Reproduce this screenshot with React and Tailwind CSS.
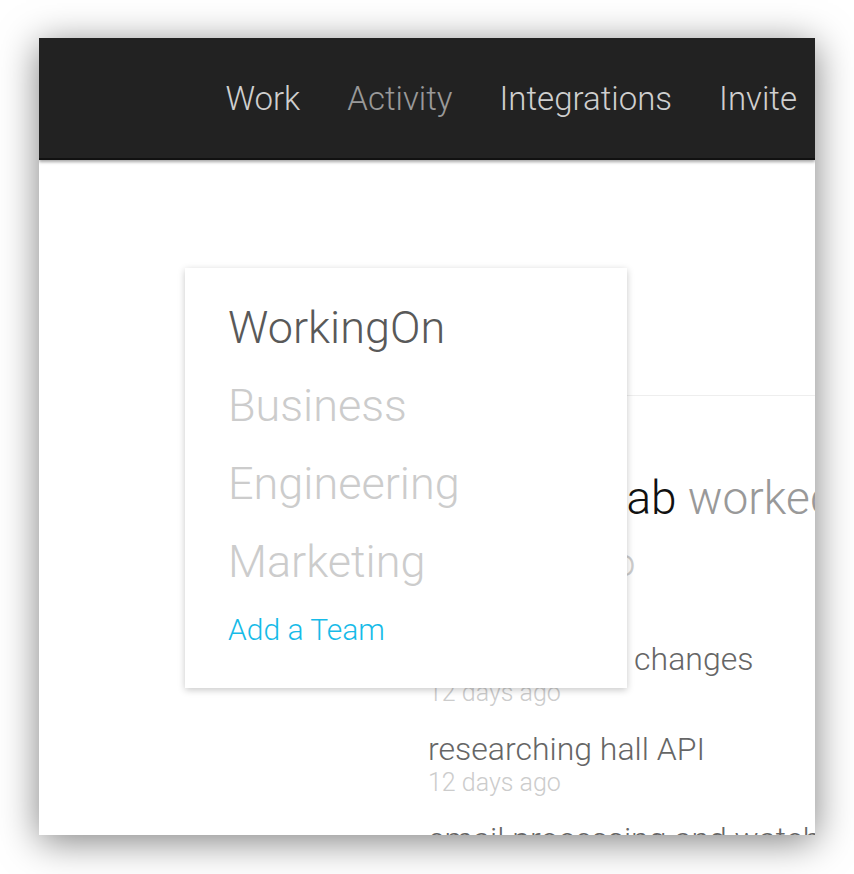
import React from 'react';

const font = { fontFamily: 'Roboto, "Liberation Sans", Arial, sans-serif' };

const navItems = [
  { label: 'Work', active: false },
  { label: 'Activity', active: true },
  { label: 'Integrations', active: false },
  { label: 'Invite', active: false },
];

const teams = ['Business', 'Engineering', 'Marketing'];

const activity = [
  { title: 'pushed config changes', when: '12 days ago' },
  { title: 'researching hall API', when: '12 days ago' },
  { title: 'email processing and watchers', when: '12 days ago' },
];

// --- TEAM DROPDOWN ---
const TeamMenu = () => (
  <div className="absolute left-[146px] top-[230px] w-[442px] bg-white pt-[21px] pb-[38px] pl-[43px] shadow-[0_2px_7px_rgba(0,0,0,0.22)]">
    <div className="text-[45px] leading-[78px] font-light text-[#595959]">WorkingOn</div>
    {teams.map((t) => (
      <div key={t} className="text-[45px] leading-[78px] font-light text-[#cccccc]">{t}</div>
    ))}
    <div className="mt-[9px] text-[30px] leading-[40px] font-light text-[#17bbe8]">Add a Team</div>
  </div>
);

export default function App() {
  return (
    <div className="min-h-screen bg-white pt-[38px] pl-[39px]" style={font}>
      <div className="relative w-[776px] h-[797px] overflow-hidden bg-white shadow-[0_6px_36px_rgba(0,0,0,0.5)]">
        {/* NAV */}
        <nav className="h-[122px] bg-[#222] border-b-2 border-[#111] flex items-center justify-end gap-[47px] pr-[18px] shadow-[0_2px_3px_rgba(0,0,0,0.35)] relative z-10">
          {navItems.map((n) => (
            <span
              key={n.label}
              className={`text-[33px] leading-[33px] font-light ${n.active ? 'text-[#999]' : 'text-[#cfcfcf]'}`}
            >
              {n.label}
            </span>
          ))}
        </nav>

        {/* FEED */}
        <div className="ml-[360px] h-[236px] border-b border-[#eeeeee]" />
        <div className="pl-[389px] pt-[76px] whitespace-nowrap">
          <div className="pl-[5px] text-[46px] leading-[52px] font-light">
            <span className="text-[#111]">Tom Wahab</span>
            <span className="text-[#999]"> worked on WorkingOn</span>
          </div>
          <div className="mt-[16px] text-[39px] leading-[46px] font-light text-[#cccccc]">12 days ago</div>

          <div className="mt-[54px] flex flex-col gap-[22px]">
            {activity.map((a) => (
              <div key={a.title}>
                <div className="text-[32px] leading-[38px] font-light text-[#666]">{a.title}</div>
                <div className="text-[25px] leading-[30px] font-light text-[#cccccc]">{a.when}</div>
              </div>
            ))}
          </div>
        </div>

        <TeamMenu />
      </div>
    </div>
  );
}
